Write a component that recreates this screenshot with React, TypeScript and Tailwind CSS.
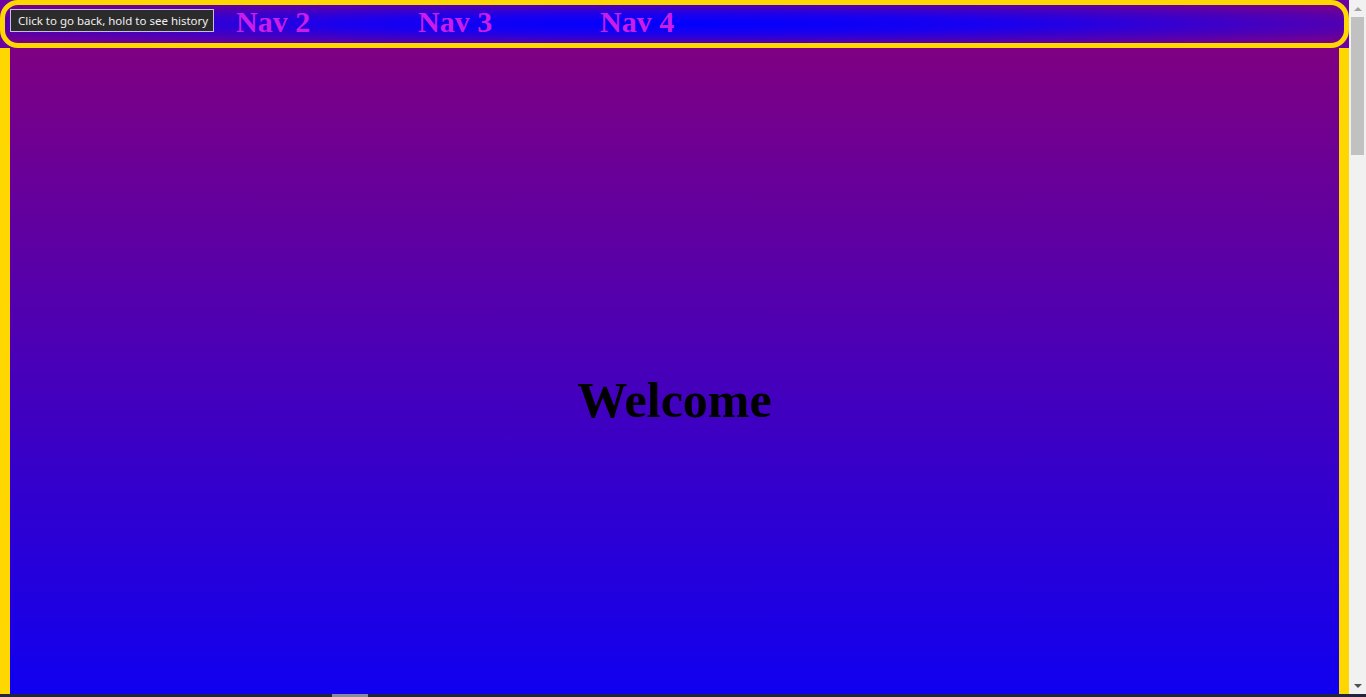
import React from "react";

const navItems = ["Nav 1", "Nav 2", "Nav 3", "Nav 4"];

function Scrollbar() {
  return (
    <div className="w-[17px] bg-[#f1f1f1] flex flex-col items-center">
      {/* flèche haut */}
      <div className="h-[17px] w-full flex items-center justify-center">
        <div className="w-0 h-0 border-x-[4px] border-x-transparent border-b-[4px] border-b-[#a3a3a3]" />
      </div>
      <div className="w-[13px] h-[138px] bg-[#c1c1c1]" />
      <div className="flex-1" />
      <div className="h-[17px] w-full flex items-center justify-center">
        <div className="w-0 h-0 border-x-[4px] border-x-transparent border-t-[4px] border-t-[#505050]" />
      </div>
    </div>
  );
}

export default function App() {
  return (
    <div className="relative h-[697px] w-full flex flex-col overflow-hidden font-['Liberation_Serif',serif]">
      <div className="flex flex-1 min-h-0">
        <div className="flex-1 flex flex-col">
          {/* Barre de navigation */}
          <div className="bg-[#6c00a2]">
            <nav className="h-[48px] rounded-[18px] border-[5px] border-[#ffd700] bg-[radial-gradient(ellipse_at_center,#0000ff_0%,#1a00ee_35%,#800080_100%)] flex items-start pl-[49px] pt-[2px]">
              {navItems.map((item, i) => (
                <span
                  key={item}
                  className={
                    "w-[182px] text-[30px] leading-[30px] font-bold text-[#cb1de8]" +
                    (i === 0 ? " invisible" : "")
                  }
                >
                  {item}
                </span>
              ))}
            </nav>
          </div>

          {/* Contenu principal */}
          <main className="flex-1 border-x-[10px] border-[#ffd700] bg-[linear-gradient(to_bottom,#7f0082,#1000f0)] text-center pt-[327px]">
            <h1 className="text-[50px] leading-[50px] font-bold text-black">Welcome</h1>
          </main>
        </div>
        <Scrollbar />
      </div>

      {/* bande du bas */}
      <div className="h-[3px] bg-[#23233a] flex">
        <div className="ml-[332px] w-[36px] bg-[#8a8a9a]" />
      </div>

      {/* Infobulle du navigateur */}
      <div className="absolute left-[10px] top-[9px] h-[23px] w-[204px] bg-[#2b2b2b] border border-[#c8bfe0] flex items-center px-[7px] text-[11.5px] text-[#f0f0f0] font-['Noto_Sans',sans-serif] whitespace-nowrap">
        Click to go back, hold to see history
      </div>
    </div>
  );
}
